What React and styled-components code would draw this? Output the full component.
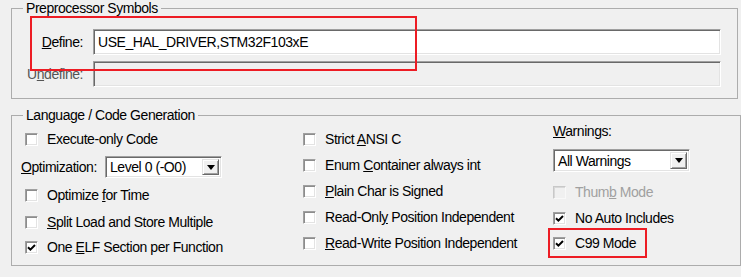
import React from "react";
import styled, { createGlobalStyle } from "styled-components";

const Global = createGlobalStyle`
  html, body { margin: 0; padding: 0; background: #f0f0f0; }
  body {
    font-family: "Liberation Sans", Arial, sans-serif;
    font-size: 14px;
    letter-spacing: -0.45px;
    color: #000;
  }
  * { box-sizing: border-box; }
`;

const Page = styled.div`
  position: relative;
  width: 741px;
  height: 277px;
  overflow: hidden;
  padding-left: 11px;
`;

const Group = styled.fieldset`
  margin: ${(p) => p.$mt || 0}px 0 0 0;
  padding: 0;
  width: ${(p) => p.$w}px;
  min-width: 0;
  border: 1px solid #acacac;
`;

const Legend = styled.legend`
  margin-left: 11px;
  padding: 0 3px;
  line-height: 16px;
  height: 16px;
`;

const SymbolsBody = styled.div`
  display: grid;
  grid-template-columns: 71px 628px;
  column-gap: 10px;
  row-gap: 6px;
  align-items: center;
  padding: 13px 16px 11px 0;
`;

const FieldLabel = styled.label`
  text-align: right;
  color: ${(p) => (p.$disabled ? "#555555" : "#000")};
`;

const TextBox = styled.div`
  height: 26px;
  background: ${(p) => (p.$disabled ? "#f0f0f0" : "#fff")};
  border: 1px solid;
  border-color: #a0a0a0 #fff #fff #a0a0a0;
  box-shadow: inset 1px 1px #696969, inset -1px -1px #e3e3e3;
  padding: 0 4px;
  display: flex;
  align-items: center;
`;

const CodeBody = styled.div`
  display: grid;
  grid-template-columns: 282px 250px 1fr;
  height: 142px;
  padding-left: 9px;
`;

const Column = styled.div`
  display: flex;
  flex-direction: column;
  padding-top: ${(p) => p.$pt || 0}px;
  gap: ${(p) => p.$gap || 0}px;
`;

const CheckRow = styled.div`
  display: flex;
  align-items: center;
  height: 20px;
  gap: 9px;
  margin-left: ${(p) => p.$ml || 0}px;
  margin-top: ${(p) => p.$mt || 0}px;
  color: ${(p) => (p.$disabled ? "#a0a0a0" : "#000")};
`;

const Box = styled.span`
  width: 13px;
  height: 13px;
  flex: none;
  background: ${(p) => (p.$disabled ? "#f0f0f0" : "#fff")};
  border: 1px solid;
  border-color: ${(p) =>
    p.$disabled ? "#c8c8c8 #f8f8f8 #f8f8f8 #c8c8c8" : "#a0a0a0 #fff #fff #a0a0a0"};
  box-shadow: ${(p) =>
    p.$disabled
      ? "inset 1px 1px #d8d8d8"
      : "inset 1px 1px #8c8c8c, inset -1px -1px #e3e3e3"};
  display: flex;
  align-items: center;
  justify-content: center;
`;

const InlineRow = styled.div`
  display: flex;
  align-items: center;
  margin-top: ${(p) => p.$mt || 0}px;
`;

const InlineLabel = styled.label`
  width: 84px;
`;

const Select = styled.div`
  width: ${(p) => p.$w}px;
  height: ${(p) => p.$h}px;
  background: #fff;
  border: 1px solid;
  border-color: #a0a0a0 #fff #fff #a0a0a0;
  box-shadow: inset 1px 1px #696969, inset -1px -1px #e3e3e3;
  padding: 2px;
  display: flex;
  align-items: stretch;
`;

const SelText = styled.span`
  flex: 1;
  padding-left: 2px;
  display: flex;
  align-items: center;
`;

const DropBtn = styled.span`
  width: 17px;
  background: #f0f0f0;
  border: 1px solid;
  border-color: #e3e3e3 #696969 #696969 #e3e3e3;
  box-shadow: inset 1px 1px #fff, inset -1px -1px #a0a0a0;
  display: flex;
  align-items: center;
  justify-content: center;
`;

const SmallLabel = styled.div`
  line-height: 16px;
  margin-bottom: 10px;
`;

const Highlight = styled.div`
  position: absolute;
  left: ${(p) => p.$x}px;
  top: ${(p) => p.$y}px;
  width: ${(p) => p.$w}px;
  height: ${(p) => p.$h}px;
  border: 2px solid #ed1c24;
  pointer-events: none;
`;

const Check = ({ checked, disabled, children, ml, mt }) => (
  <CheckRow $disabled={disabled} $ml={ml} $mt={mt}>
    <Box $disabled={disabled}>
      {checked && (
        <svg width="9" height="9" viewBox="0 0 9 9">
          <path d="M1 4.2 L3.4 6.6 L8 2" fill="none" stroke="#000" strokeWidth="2" />
        </svg>
      )}
    </Box>
    <span>{children}</span>
  </CheckRow>
);

const Dropdown = ({ w, h, value }) => (
  <Select $w={w} $h={h}>
    <SelText>{value}</SelText>
    <DropBtn>
      <svg width="8" height="5" viewBox="0 0 8 5">
        <path d="M0 0 H8 L4 5 Z" fill="#000" />
      </svg>
    </DropBtn>
  </Select>
);

export default function App() {
  return (
    <>
      <Global />
      <Page>
        <Group $w={727}>
          <Legend>Preprocessor Symbols</Legend>
          <SymbolsBody>
            <FieldLabel>
              <u>D</u>efine:
            </FieldLabel>
            <TextBox>USE_HAL_DRIVER,STM32F103xE</TextBox>
            <FieldLabel $disabled>
              U<u>n</u>define:
            </FieldLabel>
            <TextBox $disabled />
          </SymbolsBody>
        </Group>

        <Group $w={730} $mt={8}>
          <Legend>Language / Code Generation</Legend>
          <CodeBody>
            <Column $pt={6}>
              <Check ml={4}>Execute-only Code</Check>
              <InlineRow $mt={7}>
                <InlineLabel>
                  <u>O</u>ptimization:
                </InlineLabel>
                <Dropdown w={117} h={22} value="Level 0 (-O0)" />
              </InlineRow>
              <Check ml={4} mt={7}>
                Optimize <u>f</u>or Time
              </Check>
              <Check ml={4} mt={7}>
                <u>S</u>plit Load and Store Multiple
              </Check>
              <Check ml={4} mt={5} checked>
                One <u>E</u>LF Section per Function
              </Check>
            </Column>
            <Column $pt={6} $gap={6}>
              <Check>
                Strict <u>A</u>NSI C
              </Check>
              <Check>
                Enum <u>C</u>ontainer always int
              </Check>
              <Check>
                <u>P</u>lain Char is Signed
              </Check>
              <Check>
                Read-Onl<u>y</u> Position Independent
              </Check>
              <Check>
                <u>R</u>ead-Write Position Independent
              </Check>
            </Column>
            <Column>
              <SmallLabel>
                <u>W</u>arnings:
              </SmallLabel>
              <Dropdown w={137} h={23} value="All Warnings" />
              <Check disabled mt={10}>
                Thum<u>b</u> Mode
              </Check>
              <Check checked mt={6}>
                No Auto Includes
              </Check>
              <Check checked mt={5}>
                C99 Mode
              </Check>
            </Column>
          </CodeBody>
        </Group>

        <Highlight $x={30} $y={16} $w={387} $h={55} />
        <Highlight $x={548} $y={228} $w={99} $h={30} />
      </Page>
    </>
  );
}
